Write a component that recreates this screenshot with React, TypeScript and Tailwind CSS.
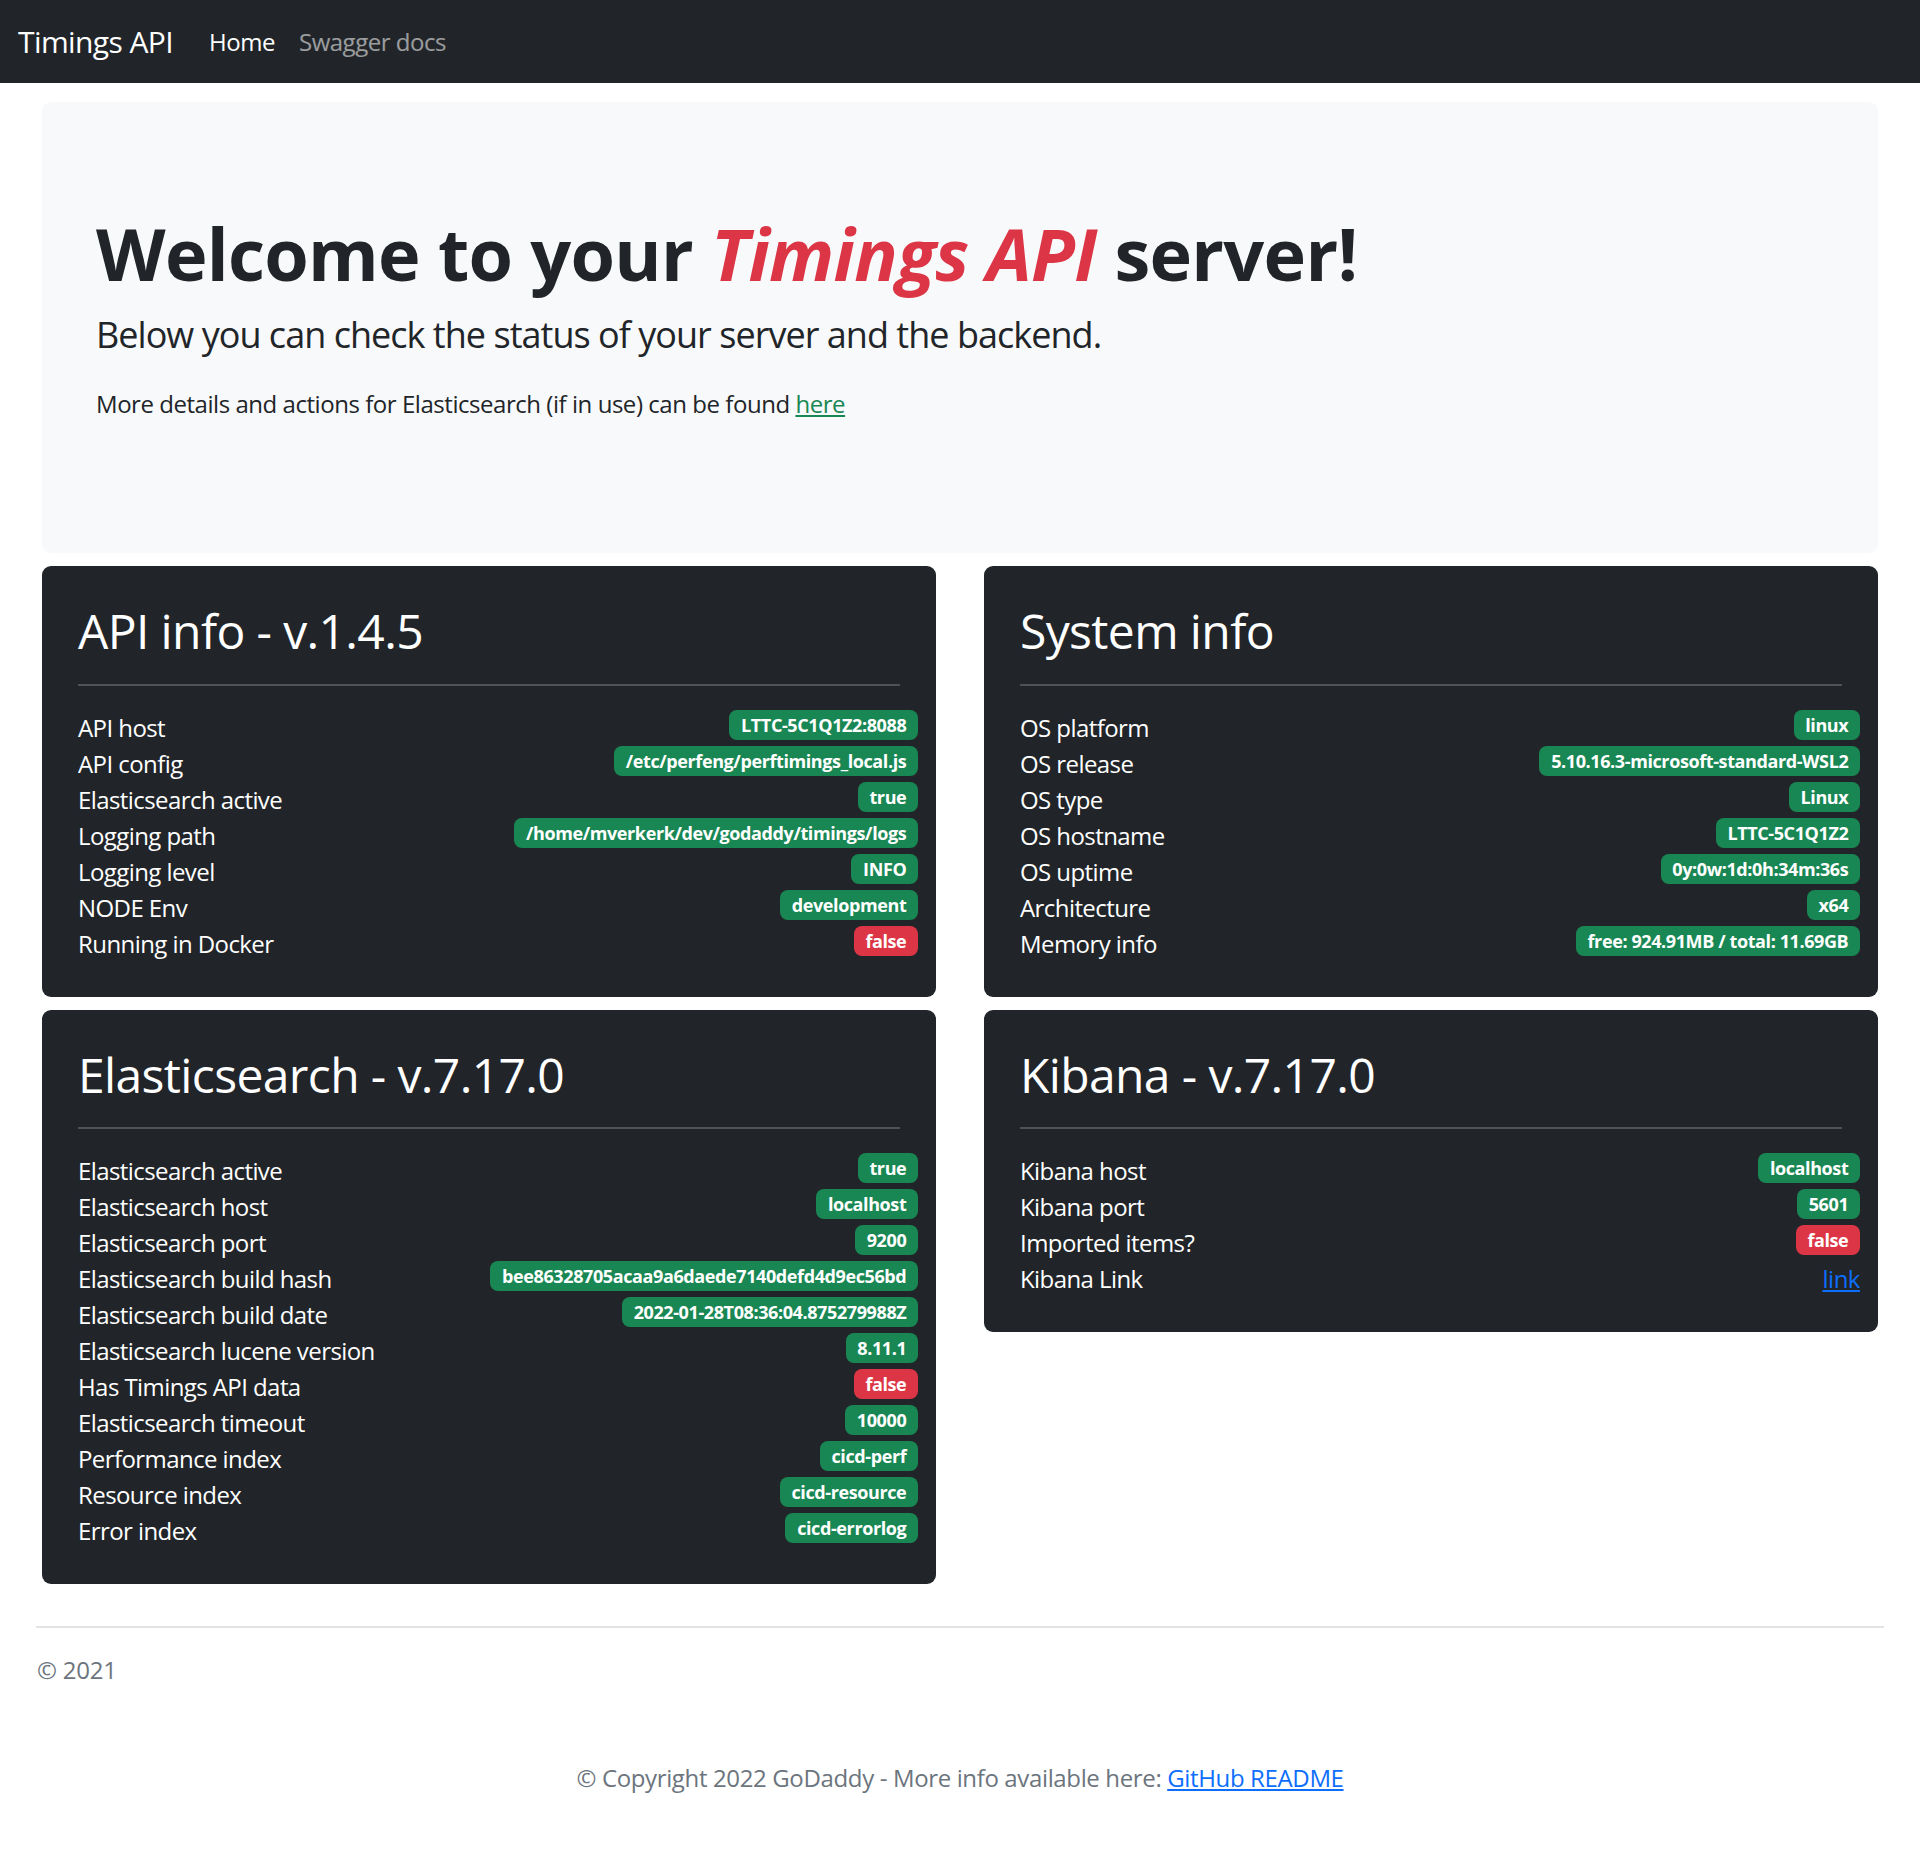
import React from "react";

type Row = { label: string; value: string; kind?: "ok" | "bad" | "link" };

const apiRows: Row[] = [
  { label: "API host", value: "LTTC-5C1Q1Z2:8088" },
  { label: "API config", value: "/etc/perfeng/perftimings_local.js" },
  { label: "Elasticsearch active", value: "true" },
  { label: "Logging path", value: "/home/mverkerk/dev/godaddy/timings/logs" },
  { label: "Logging level", value: "INFO" },
  { label: "NODE Env", value: "development" },
  { label: "Running in Docker", value: "false", kind: "bad" },
];

const sysRows: Row[] = [
  { label: "OS platform", value: "linux" },
  { label: "OS release", value: "5.10.16.3-microsoft-standard-WSL2" },
  { label: "OS type", value: "Linux" },
  { label: "OS hostname", value: "LTTC-5C1Q1Z2" },
  { label: "OS uptime", value: "0y:0w:1d:0h:34m:36s" },
  { label: "Architecture", value: "x64" },
  { label: "Memory info", value: "free: 924.91MB / total: 11.69GB" },
];

const esRows: Row[] = [
  { label: "Elasticsearch active", value: "true" },
  { label: "Elasticsearch host", value: "localhost" },
  { label: "Elasticsearch port", value: "9200" },
  { label: "Elasticsearch build hash", value: "bee86328705acaa9a6daede7140defd4d9ec56bd" },
  { label: "Elasticsearch build date", value: "2022-01-28T08:36:04.875279988Z" },
  { label: "Elasticsearch lucene version", value: "8.11.1" },
  { label: "Has Timings API data", value: "false", kind: "bad" },
  { label: "Elasticsearch timeout", value: "10000" },
  { label: "Performance index", value: "cicd-perf" },
  { label: "Resource index", value: "cicd-resource" },
  { label: "Error index", value: "cicd-errorlog" },
];

const kibanaRows: Row[] = [
  { label: "Kibana host", value: "localhost" },
  { label: "Kibana port", value: "5601" },
  { label: "Imported items?", value: "false", kind: "bad" },
  { label: "Kibana Link", value: "link", kind: "link" },
];

function Badge({ value, kind }: { value: string; kind?: Row["kind"] }) {
  if (kind === "link") {
    return (
      <a href="#" className="text-[#0d6efd] underline leading-[36px]">
        {value}
      </a>
    );
  }
  return (
    <span
      className={
        "inline-block rounded-[8px] px-[11.7px] pt-[6.3px] pb-[5.7px] text-[18px] font-bold leading-[18px] tracking-[-0.022em] text-white whitespace-nowrap " +
        (kind === "bad" ? "bg-[#dc3545]" : "bg-[#198754]")
      }
    >
      {value}
    </span>
  );
}

function Card({ title, rows }: { title: string; rows: Row[] }) {
  return (
    <div className="rounded-[9px] bg-[#212529] px-[36px] pt-[36px] pb-[35px] text-white">
      <h2 className="mb-[24px] text-[48px] leading-[57.6px] font-normal tracking-[-0.013em]">{title}</h2>
      <div className="h-[2px] bg-[#4f5357]" />
      <div className="mt-[24px] mr-[-18px]">
        {rows.map((r) => (
          <div key={r.label} className="flex h-[36px] items-start justify-between">
            <span className="leading-[36px] tracking-[-0.024em]">{r.label}</span>
            <Badge value={r.value} kind={r.kind} />
          </div>
        ))}
      </div>
    </div>
  );
}

export default function App() {
  return (
    <div className="min-h-[1874px] bg-white text-[24px] leading-[36px] tracking-[-0.02em] text-[#212529] font-['Segoe_UI','Open_Sans',sans-serif]">
      <nav className="flex h-[83px] items-center bg-[#212529] px-[18px]">
        <span className="mr-[24px] text-[30px] leading-[45px] tracking-[-0.02em] text-white">Timings API</span>
        <a href="#" className="px-[12px] text-white">
          Home
        </a>
        <a href="#" className="px-[12px] text-white/55">
          Swagger docs
        </a>
      </nav>

      <div className="px-[42px] pt-[19px]">
        <section className="rounded-[9px] bg-[#f8f9fa] px-[54px] pt-[108px] pb-[107px]">
          <h1 className="mb-[12px] text-[72px] leading-[86px] font-bold tracking-[-0.01em]">
            Welcome to your <span className="italic text-[#dc3545]">Timings API</span> server!
          </h1>
          <p className="mb-[24px] text-[36px] leading-[54px] tracking-[-0.027em]">
            Below you can check the status of your server and the backend.
          </p>
          <p className="mb-[24px] tracking-[-0.019em]">
            More details and actions for Elasticsearch (if in use) can be found{" "}
            <a href="#" className="text-[#198754] underline">
              here
            </a>
          </p>
        </section>

        <div className="mt-[13px] grid grid-cols-2 items-start gap-x-[48px] gap-y-[13px]">
          <Card title="API info - v.1.4.5" rows={apiRows} />
          <Card title="System info" rows={sysRows} />
          <Card title="Elasticsearch - v.7.17.0" rows={esRows} />
          <Card title="Kibana - v.7.17.0" rows={kibanaRows} />
        </div>
      </div>

      <footer className="mt-[42px] px-[36px]">
        <div className="h-[2px] bg-[#e2e3e5]" />
        <p className="mt-[24px] pl-px tracking-[-0.01em] text-[#6c757d]">© 2021</p>
        <p className="mt-[72px] text-center tracking-[-0.015em] text-[#6c757d]">
          © Copyright 2022 GoDaddy - More info available here:{" "}
          <a href="#" className="text-[#0d6efd] underline">
            GitHub README
          </a>
        </p>
      </footer>
    </div>
  );
}
